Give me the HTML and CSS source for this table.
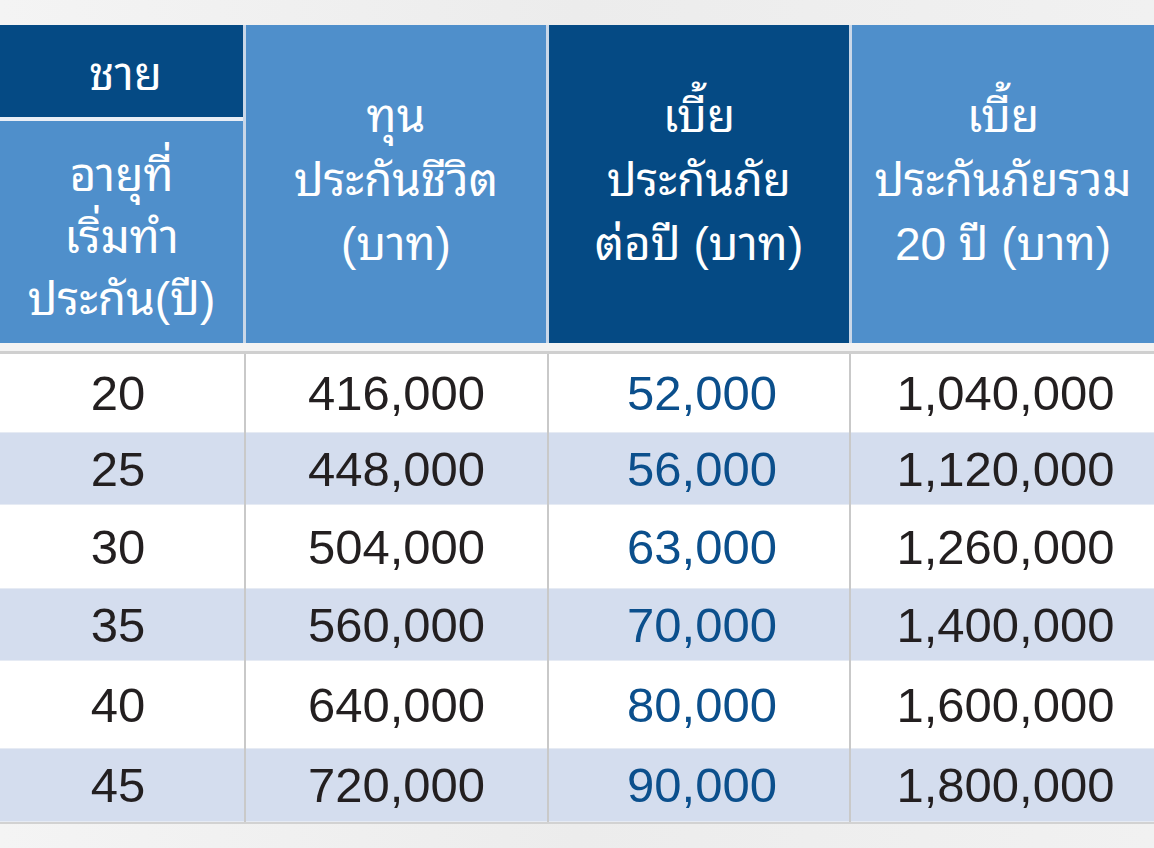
FILE: index.html
```html
<!DOCTYPE html>
<html lang="th">
<head>
<meta charset="utf-8">
<link rel="stylesheet" href="styles.css">
</head>
<body>
<div class="page">
  <div class="table">
    <div class="head">
      <div class="head-first">
        <div class="cell-gender">ชาย</div>
        <div class="cell-age"><span class="ln">อายุที่</span><span class="ln">เริ่มทำ</span><span class="ln">ประกัน(ปี)</span></div>
      </div>
      <div class="hcell light"><span class="ln">ทุน</span><span class="ln">ประกันชีวิต</span><span class="ln">(บาท)</span></div>
      <div class="hcell dark"><span class="ln">เบี้ย</span><span class="ln">ประกันภัย</span><span class="ln">ต่อปี (บาท)</span></div>
      <div class="hcell light"><span class="ln">เบี้ย</span><span class="ln">ประกันภัยรวม</span><span class="ln">20 ปี (บาท)</span></div>
    </div>
    <div class="sep"></div>
    <div class="body">
      <div class="row"><div class="c">20</div><div class="c">416,000</div><div class="c blue">52,000</div><div class="c">1,040,000</div></div>
      <div class="row alt"><div class="c">25</div><div class="c">448,000</div><div class="c blue">56,000</div><div class="c">1,120,000</div></div>
      <div class="row"><div class="c">30</div><div class="c">504,000</div><div class="c blue">63,000</div><div class="c">1,260,000</div></div>
      <div class="row alt"><div class="c">35</div><div class="c">560,000</div><div class="c blue">70,000</div><div class="c">1,400,000</div></div>
      <div class="row"><div class="c">40</div><div class="c">640,000</div><div class="c blue">80,000</div><div class="c">1,600,000</div></div>
      <div class="row alt"><div class="c">45</div><div class="c">720,000</div><div class="c blue">90,000</div><div class="c">1,800,000</div></div>
    </div>
  </div>
</div>
</body>
</html>
```

FILE: styles.css
```css
html, body {
  margin: 0;
  padding: 0;
}
body {
  width: 1154px;
  height: 848px;
  overflow: hidden;
  background: linear-gradient(90deg, #f4f4f4 0%, #ececec 50%, #f1f1f1 100%);
  font-family: "Liberation Sans", "Noto Sans Thai Looped", "Noto Sans", sans-serif;
}
.page {
  padding-top: 25px;
}
.head {
  display: grid;
  grid-template-columns: 243px 300px 300px 302px;
  column-gap: 3px;
  background: #c9d7e8;
  height: 318px;
  color: #ffffff;
}
.head-first {
  display: flex;
  flex-direction: column;
  gap: 4px;
  background: #e9eef6;
}
.cell-gender {
  height: 92px;
  background: #054a84;
  display: flex;
  align-items: center;
  justify-content: center;
  font-size: 46px;
  padding-left: 8px;
  padding-bottom: 4px;
  box-sizing: border-box;
}
.cell-age {
  flex: 1;
  background: #4f8fcb;
  display: flex;
  flex-direction: column;
  align-items: center;
  justify-content: center;
  text-align: center;
  font-size: 46px;
  padding-top: 10px;
}
.cell-age .ln {
  height: 62px;
  line-height: 62px;
}
.hcell {
  display: flex;
  flex-direction: column;
  align-items: center;
  justify-content: center;
  text-align: center;
  font-size: 46px;
  padding-bottom: 8px;
}
.ln {
  display: block;
  height: 64px;
  line-height: 64px;
  white-space: nowrap;
}
.hcell.light { background: #4f8fcb; }
.hcell.dark { background: #054a84; }
.sep {
  height: 8px;
  background: #f3f3f3;
  border-bottom: 3px solid #cfcfcf;
}
.body {
  display: grid;
  grid-template-rows: 78px 73px 83px 73px 87px 74px;
  border-bottom: 2px solid #d2d2d2;
}
.row {
  display: grid;
  grid-template-columns: 244px 303px 302px 1fr;
  background: #ffffff;
}
.row.alt {
  background: #d4ddee;
  box-shadow: inset 0 1px 0 #e6ebf4, inset 0 -1px 0 #e6ebf4;
}
.c {
  display: flex;
  align-items: center;
  justify-content: center;
  font-family: "Liberation Sans", Arial, sans-serif;
  font-size: 49px;
  color: #231f20;
}
.c:first-child {
  padding-right: 8px;
}
.c + .c {
  border-left: 2px solid #c9c9c9;
}
.c.blue {
  color: #0b4f8c;
  padding-left: 6px;
}
.c:last-child {
  padding-left: 6px;
}
```
